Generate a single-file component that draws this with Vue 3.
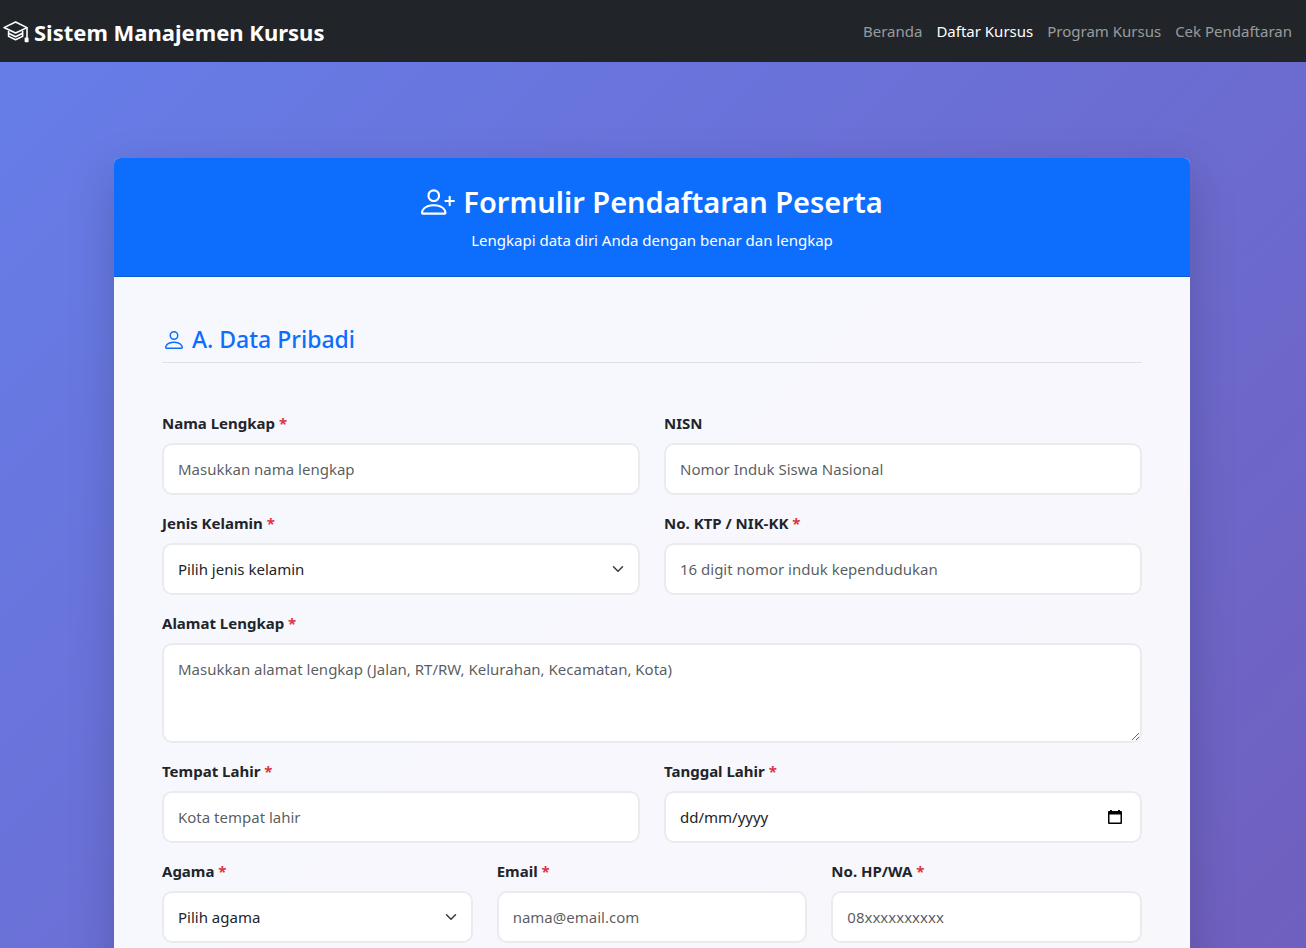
<script setup>
import { ref } from 'vue'

const navLinks = [
  { label: 'Beranda' },
  { label: 'Daftar Kursus', active: true },
  { label: 'Program Kursus' },
  { label: 'Cek Pendaftaran' },
]

const fields = [
  { id: 'nama', label: 'Nama Lengkap', required: true, kind: 'text', span: 'half', hint: 'Masukkan nama lengkap' },
  { id: 'nisn', label: 'NISN', kind: 'text', span: 'half', hint: 'Nomor Induk Siswa Nasional' },
  { id: 'kelamin', label: 'Jenis Kelamin', required: true, kind: 'select', span: 'half', hint: 'Pilih jenis kelamin' },
  { id: 'nik', label: 'No. KTP / NIK-KK', required: true, kind: 'text', span: 'half', hint: '16 digit nomor induk kependudukan' },
  { id: 'alamat', label: 'Alamat Lengkap', required: true, kind: 'area', span: 'full', hint: 'Masukkan alamat lengkap (Jalan, RT/RW, Kelurahan, Kecamatan, Kota)' },
  { id: 'tempat', label: 'Tempat Lahir', required: true, kind: 'text', span: 'half', hint: 'Kota tempat lahir' },
  { id: 'tanggal', label: 'Tanggal Lahir', required: true, kind: 'date', span: 'half', hint: 'dd/mm/yyyy' },
  { id: 'agama', label: 'Agama', required: true, kind: 'select', span: 'third', hint: 'Pilih agama' },
  { id: 'email', label: 'Email', required: true, kind: 'email', span: 'third', hint: 'nama@email.com' },
  { id: 'hp', label: 'No. HP/WA', required: true, kind: 'tel', span: 'third', hint: '08xxxxxxxxxx' },
]

const birthDate = ref('')
</script>

<template>
  <div class="page">
    <header class="navbar">
      <a class="brand" href="#">
        <svg class="brand-icon" viewBox="0 0 26 24" fill="none" stroke="currentColor" stroke-width="1.6" stroke-linejoin="round" aria-hidden="true">
          <path d="M1 7.600 12.600 2 24 7.600 12.600 13z" />
          <path d="M5.600 10.800v2.400l7 3.600 7-3.600v-2.400" />
          <path d="M5.600 13.200v3.200l7 3.400 7-3.400v-3.200" />
          <path d="M24 7.600V18" />
          <path d="M22.400 18.400h2.400v3h-2.400z" fill="currentColor" />
        </svg>
        <span>Sistem Manajemen Kursus</span>
      </a>
      <nav class="nav">
        <a v-for="link in navLinks" :key="link.label" href="#" :class="{ active: link.active }">{{ link.label }}</a>
      </nav>
    </header>

    <main class="content">
      <section class="card">
        <div class="card-header">
          <h1>
            <svg class="title-icon" viewBox="0 0 16 16" fill="currentColor" aria-hidden="true">
              <path d="M6 8a3 3 0 1 0 0-6 3 3 0 0 0 0 6m2-3a2 2 0 1 1-4 0 2 2 0 0 1 4 0m4 8c0 1-1 1-1 1H1s-1 0-1-1 1-4 6-4 6 3 6 4m-1-.004c-.001-.246-.154-.986-.832-1.664C9.516 10.68 8.289 10 6 10s-3.516.68-4.168 1.332c-.678.678-.83 1.418-.832 1.664z" />
              <path d="M13.5 5a.5.5 0 0 1 .5.5V7h1.5a.5.5 0 0 1 0 1H14v1.5a.5.5 0 0 1-1 0V8h-1.5a.5.5 0 0 1 0-1H13V5.5a.5.5 0 0 1 .5-.5" />
            </svg>
            <span>Formulir Pendaftaran Peserta</span>
          </h1>
          <p>Lengkapi data diri Anda dengan benar dan lengkap</p>
        </div>

        <form class="card-body" @submit.prevent>
          <h2>
            <svg class="section-icon" viewBox="0 0 16 16" fill="currentColor" aria-hidden="true">
              <path d="M8 8a3 3 0 1 0 0-6 3 3 0 0 0 0 6m2-3a2 2 0 1 1-4 0 2 2 0 0 1 4 0m4 8c0 1-1 1-1 1H3s-1 0-1-1 1-4 6-4 6 3 6 4m-1-.004c-.001-.246-.154-.986-.832-1.664C11.516 10.68 10.289 10 8 10s-3.516.68-4.168 1.332c-.678.678-.83 1.418-.832 1.664z" />
            </svg>
            <span>A. Data Pribadi</span>
          </h2>

          <div class="fields">
            <div v-for="f in fields" :key="f.id" class="field" :class="f.span">
              <label :for="f.id">{{ f.label }} <span v-if="f.required" class="required">*</span></label>

              <div v-if="f.kind === 'select'" class="control-wrap">
                <select :id="f.id" class="control">
                  <option value="">{{ f.hint }}</option>
                </select>
                <svg class="chevron" viewBox="0 0 16 16" fill="none" stroke="#343a40" stroke-width="2" stroke-linecap="round" stroke-linejoin="round" aria-hidden="true">
                  <path d="m2 5 6 6 6-6" />
                </svg>
              </div>

              <textarea v-else-if="f.kind === 'area'" :id="f.id" class="control" :placeholder="f.hint"></textarea>

              <div v-else-if="f.kind === 'date'" class="control-wrap">
                <input :id="f.id" v-model="birthDate" class="control date" type="text" inputmode="numeric" :placeholder="f.hint" />
                <button class="calendar" type="button" aria-label="Pilih tanggal">
                  <svg viewBox="0 0 16 16" fill="currentColor" aria-hidden="true">
                    <path fill-rule="evenodd" d="M3 1h2v1h6V1h2v1h1q1 0 1 1v11q0 1-1 1H2q-1 0-1-1V3q0-1 1-1h1zM2.500 5.500v8h11v-8z" />
                  </svg>
                </button>
              </div>

              <input v-else :id="f.id" class="control" :type="f.kind" :placeholder="f.hint" />
            </div>
          </div>
        </form>
      </section>
    </main>
  </div>
</template>

<style>
body {
  margin: 0;
}
</style>

<style scoped>
.page,
.page * {
  box-sizing: border-box;
}

.page {
  display: flex;
  flex-direction: column;
  height: 100vh;
  font-family: "Segoe UI", "Noto Sans", sans-serif;
  font-size: 15px;
  line-height: 24px;
  color: #212529;
  background: linear-gradient(135deg, #667eea 0%, #764ba2 100%) 0 0 / 100% 2400px;
}

.navbar {
  display: flex;
  flex: none;
  align-items: center;
  justify-content: space-between;
  min-height: 62px;
  padding: 0 14px 0 3px;
  background: #212529;
}

.brand {
  display: flex;
  align-items: center;
  gap: 5px;
  padding-top: 2px;
  font-size: 22px;
  font-weight: 700;
  line-height: 36px;
  color: #fff;
  text-decoration: none;
}

.brand-icon {
  width: 26px;
  height: 24px;
}

.nav {
  display: flex;
  gap: 14px;
}

.nav a {
  color: rgba(255, 255, 255, 0.55);
  text-decoration: none;
}

.nav a.active {
  color: #fff;
}

.content {
  flex: 1;
  min-height: 0;
  padding: 96px 116px 48px 114px;
  overflow-y: auto;
  scrollbar-width: none;
}

.card {
  background: rgba(255, 255, 255, 0.95);
  border-radius: 6px;
  box-shadow: 0 16px 48px rgba(0, 0, 0, 0.175);
}

.card-header {
  padding: 24px;
  color: #fff;
  text-align: center;
  background: #0d6efd;
  border-bottom: 1px solid #0b5bd1;
  border-radius: 6px 6px 0 0;
}

.card-header h1 {
  display: flex;
  align-items: center;
  justify-content: center;
  gap: 8px;
  margin: 0 0 6px;
  font-size: 29px;
  font-weight: 600;
  line-height: 40px;
}

.card-header p {
  margin: 0;
}

.title-icon {
  width: 34px;
  height: 34px;
}

.card-body {
  padding: 48px;
}

.card-body h2 {
  display: flex;
  align-items: center;
  gap: 6px;
  margin: 0 0 48px;
  padding-bottom: 8px;
  font-size: 23px;
  font-weight: 500;
  line-height: 29px;
  color: #0d6efd;
  border-bottom: 1px solid #dee2e6;
}

.section-icon {
  width: 24px;
  height: 24px;
}

.fields {
  display: grid;
  grid-template-columns: repeat(6, minmax(0, 1fr));
  gap: 16px 24px;
}

.full {
  grid-column: span 6;
}

.half {
  grid-column: span 3;
}

.third {
  grid-column: span 2;
}

.field label {
  display: block;
  margin-bottom: 8px;
  font-weight: 700;
}

.required {
  color: #dc3545;
}

.control-wrap {
  position: relative;
}

.control {
  display: block;
  width: 100%;
  height: 52px;
  margin: 0;
  padding: 12px 14px;
  font: inherit;
  color: #212529;
  background: #fff;
  border: 2px solid #e9ecef;
  border-radius: 10px;
  outline: 0;
  appearance: none;
}

.control:focus {
  border-color: #0d6efd;
}

.control::placeholder {
  color: rgba(33, 37, 41, 0.75);
  opacity: 1;
}

.control.date::placeholder {
  color: #212529;
}

textarea.control {
  height: 100px;
  resize: vertical;
}

.chevron {
  position: absolute;
  top: 20px;
  right: 16px;
  width: 12px;
  height: 12px;
  pointer-events: none;
}

.calendar {
  position: absolute;
  top: 18px;
  right: 19px;
  display: block;
  width: 16px;
  height: 16px;
  padding: 0;
  color: #000;
  background: none;
  border: 0;
}

.calendar svg {
  display: block;
  width: 16px;
  height: 16px;
}
</style>
